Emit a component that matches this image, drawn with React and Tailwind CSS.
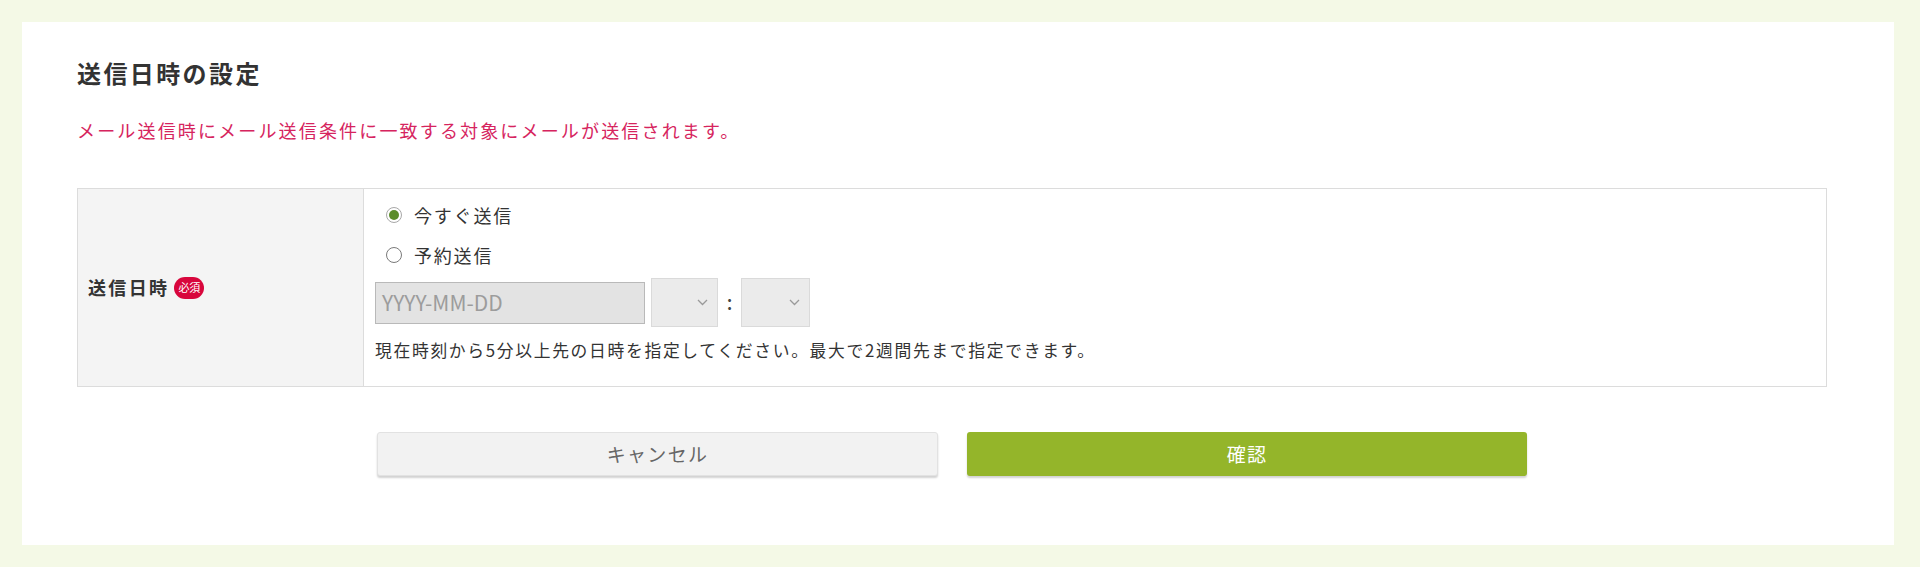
import React, { useState } from "react";

const font = {
  fontFamily: '"Noto Sans CJK JP", "Noto Sans", sans-serif',
};

function Radio({ checked, label, onClick }) {
  return (
    <label
      onClick={onClick}
      className="flex items-center h-[28px] pl-[11px] cursor-pointer text-[18px] tracking-[0.1em] text-[#333]"
    >
      <span
        className={
          checked
            ? "flex items-center justify-center w-[16px] h-[16px] rounded-full border border-[#a8a8a8] bg-white"
            : "flex items-center justify-center w-[16px] h-[16px] rounded-full border-[1.5px] border-[#7a7a7a] bg-white"
        }
      >
        {checked && <span className="w-[10px] h-[10px] rounded-full bg-[#5b8c2a]" />}
      </span>
      <span className="ml-[12px] leading-none">{label}</span>
    </label>
  );
}

function Chevron() {
  return (
    <svg width="11" height="7" viewBox="0 0 11 7" fill="none">
      <path d="M1 1l4.5 4.5L10 1" stroke="#9a9a9a" strokeWidth="1.3" />
    </svg>
  );
}

export default function App() {
  const [mode, setMode] = useState("now");

  return (
    <div
      className="min-h-[567px] bg-[#f4f9e6] pt-[22px] pb-[22px] pl-[22px] pr-[26px]"
      style={font}
    >
      <div className="bg-white pt-[33px] pb-[69px] pl-[55px] pr-[67px]">
        <h2 className="text-[24px] leading-[36px] font-bold tracking-[0.1em] text-[#333]">
          送信日時の設定
        </h2>
        <p className="mt-[25px] text-[18px] leading-[28px] tracking-[0.12em] text-[#d6245e]">
          メール送信時にメール送信条件に一致する対象にメールが送信されます。
        </p>

        {/* Table */}
        <div className="mt-[44px] flex border border-[#dcdcdc]">
          <div className="w-[286px] shrink-0 bg-[#f4f4f4] border-r border-[#dcdcdc] flex items-center pl-[10px]">
            <span className="text-[18px] font-bold tracking-[0.13em] text-[#333]">送信日時</span>
            <span className="ml-[5px] flex items-center justify-center w-[30px] h-[22px] rounded-full bg-[#d8063c] text-white text-[11px] leading-none">
              必須
            </span>
          </div>
          <div className="flex-1 pt-[12px] pb-[23px] pl-[11px]">
            <Radio checked={mode === "now"} label="今すぐ送信" onClick={() => setMode("now")} />
            <div className="mt-[12px]">
              <Radio checked={mode === "later"} label="予約送信" onClick={() => setMode("later")} />
            </div>
            <div className="mt-[9px] flex items-center">
              <div className="w-[270px] h-[42px] bg-[#e3e3e3] border border-[#b9b9b9] flex items-center pl-[6px] text-[21px] text-[#9c9c9c]">
                YYYY-MM-DD
              </div>
              <div className="ml-[6px] w-[67px] h-[49px] bg-[#ebebeb] border border-[#dadada] flex items-center justify-end pr-[9px]">
                <Chevron />
              </div>
              <span className="w-[23px] text-center text-[19px] font-medium text-[#444]">:</span>
              <div className="w-[69px] h-[49px] bg-[#ebebeb] border border-[#dadada] flex items-center justify-end pr-[9px]">
                <Chevron />
              </div>
            </div>
            <p className="mt-[10px] text-[16.8px] leading-[26px] tracking-[0.1em] text-[#333]">
              現在時刻から5分以上先の日時を指定してください。最大で2週間先まで指定できます。
            </p>
          </div>
        </div>

        {/* Buttons */}
        <div className="mt-[45px] flex justify-center gap-[29px]">
          <button className="w-[561px] h-[44px] rounded-[3px] bg-[#f2f2f2] border border-[#e2e2e2] shadow-[0_2px_2px_rgba(0,0,0,0.18)] text-[19px] tracking-[0.07em] text-[#666]">
            キャンセル
          </button>
          <button className="w-[560px] h-[44px] rounded-[3px] bg-[#94b52a] shadow-[0_2px_2px_rgba(0,0,0,0.18)] text-[19px] tracking-[0.07em] text-white">
            確認
          </button>
        </div>
      </div>
    </div>
  );
}
